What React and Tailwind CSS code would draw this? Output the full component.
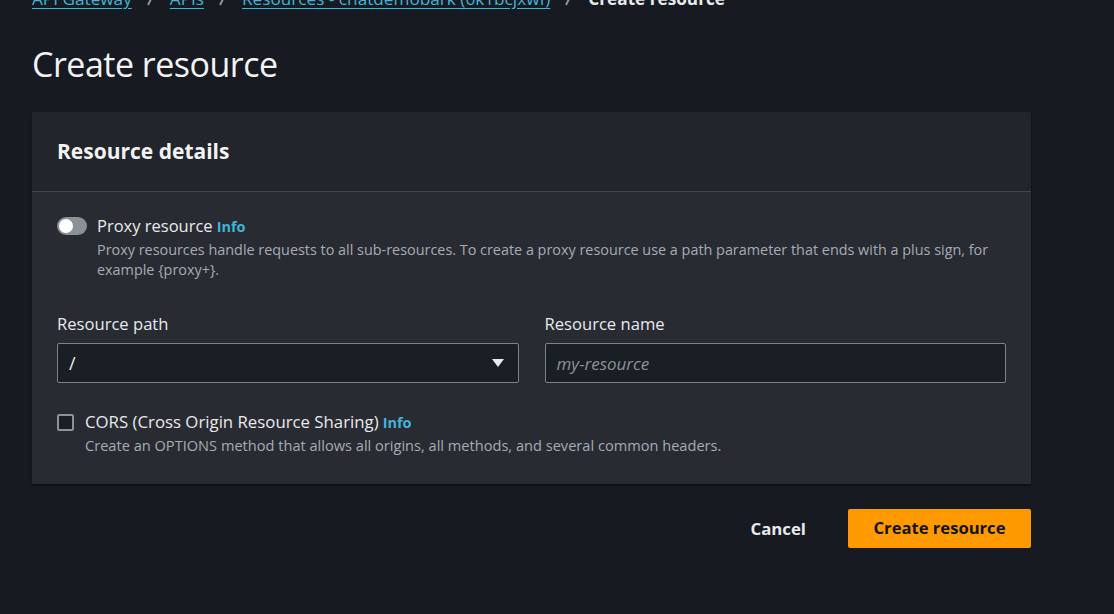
import { useState } from 'react';

const Info = () => (
  <span className="ml-1 text-[14.5px] font-bold text-[#42b4d6] cursor-pointer">Info</span>
);

const Crumb = ({ children }) => (
  <span className="text-[#42b4d6] underline underline-offset-[3px] decoration-[#42b4d6]">{children}</span>
);

const Sep = () => (
  <svg width="10" height="14" viewBox="0 0 10 14" className="mx-[14px]">
    <path d="M2 13 L8 1" stroke="#8d9299" strokeWidth="2" />
  </svg>
);

export default function App() {
  const [proxy, setProxy] = useState(false);
  const [cors, setCors] = useState(false);

  return (
    <div className="min-h-[614px] bg-[#171a21] px-[32px] font-['Open_Sans',sans-serif] text-[#e8eaed] overflow-hidden">
      {/* breadcrumbs, scrolled partly off the top */}
      <div className="mt-[-13px] flex items-center text-[17.2px] h-[24px]">
        <Crumb>API Gateway</Crumb>
        <Sep />
        <Crumb>APIs</Crumb>
        <Sep />
        <Crumb>Resources - chatdemobark (6k1bcjxwf)</Crumb>
        <Sep />
        <span className="font-bold text-[#e8eaed]">Create resource</span>
      </div>

      <h1 className="mt-[33px] text-[34px] leading-[40px] tracking-[-0.5px] text-[#f2f3f3]">Create resource</h1>

      <div className="mt-[28px] w-[999px] bg-[#292b32] shadow-[0_1px_2px_rgba(0,0,0,0.5)]">
        <div className="h-[80px] flex items-center px-[25px] bg-[#22252c] border-b border-[#41454d]">
          <h2 className="text-[21px] font-bold text-[#f2f3f3]">Resource details</h2>
        </div>

        <div className="px-[25px] pt-[24px] pb-[29px]">
          <div className="flex gap-[10px]">
            <button
              onClick={() => setProxy(!proxy)}
              className={`mt-[1px] w-[30px] h-[18px] rounded-full flex items-center px-[2px] shrink-0 ${proxy ? 'bg-[#42b4d6] justify-end' : 'bg-[#8b9196] justify-start'}`}
            >
              <span className="w-[14px] h-[14px] rounded-full bg-white" />
            </button>
            <div>
              <div className="text-[16.5px] leading-[20px]">
                Proxy resource<Info />
              </div>
              <p className="mt-[3px] text-[14.4px] leading-[20px] text-[#a5acb5]">
                Proxy resources handle requests to all sub-resources. To create a proxy resource use a path parameter that ends with a plus sign, for example {'{proxy+}'}.
              </p>
            </div>
          </div>

          <div className="mt-[33px] grid grid-cols-2 gap-[26px]">
            <div>
              <label className="block text-[16.6px] leading-[22px] mb-[8px]">Resource path</label>
              <div className="h-[40px] flex items-center justify-between px-[11px] bg-[#1a1e25] border border-[#7d838a] rounded-[2px]">
                <span className="text-[18px]">/</span>
                <svg width="14" height="10" viewBox="0 0 14 10" className="mr-[2px]">
                  <path d="M1 1 H13 L7 9 Z" fill="#e8eaed" />
                </svg>
              </div>
            </div>
            <div>
              <label className="block text-[16.6px] leading-[22px] mb-[8px]">Resource name</label>
              <input
                placeholder="my-resource"
                className="w-full h-[40px] px-[11px] bg-[#1a1e25] border border-[#7d838a] rounded-[2px] text-[17px] outline-none placeholder:italic placeholder:text-[#8d9299]"
              />
            </div>
          </div>

          <div className="mt-[29px] flex gap-[11px]">
            <button
              onClick={() => setCors(!cors)}
              className="mt-[2px] w-[17px] h-[17px] border-2 border-[#8d9299] rounded-[2px] bg-[#1a1e25] shrink-0"
            >
              {cors && <span className="block w-full h-full bg-[#42b4d6]" />}
            </button>
            <div>
              <div className="text-[16.8px] leading-[20px]">
                CORS (Cross Origin Resource Sharing)<Info />
              </div>
              <p className="mt-[2px] text-[14.6px] leading-[20px] text-[#a5acb5]">
                Create an OPTIONS method that allows all origins, all methods, and several common headers.
              </p>
            </div>
          </div>
        </div>
      </div>

      <div className="mt-[25px] w-[999px] flex justify-end items-center gap-[42px]">
        <button className="text-[16.8px] font-bold text-[#e8eaed]">Cancel</button>
        <button className="h-[39px] w-[183px] rounded-[2px] bg-[#ff9900] text-[16.6px] font-bold text-[#0f141a]">Create resource</button>
      </div>
    </div>
  );
}
